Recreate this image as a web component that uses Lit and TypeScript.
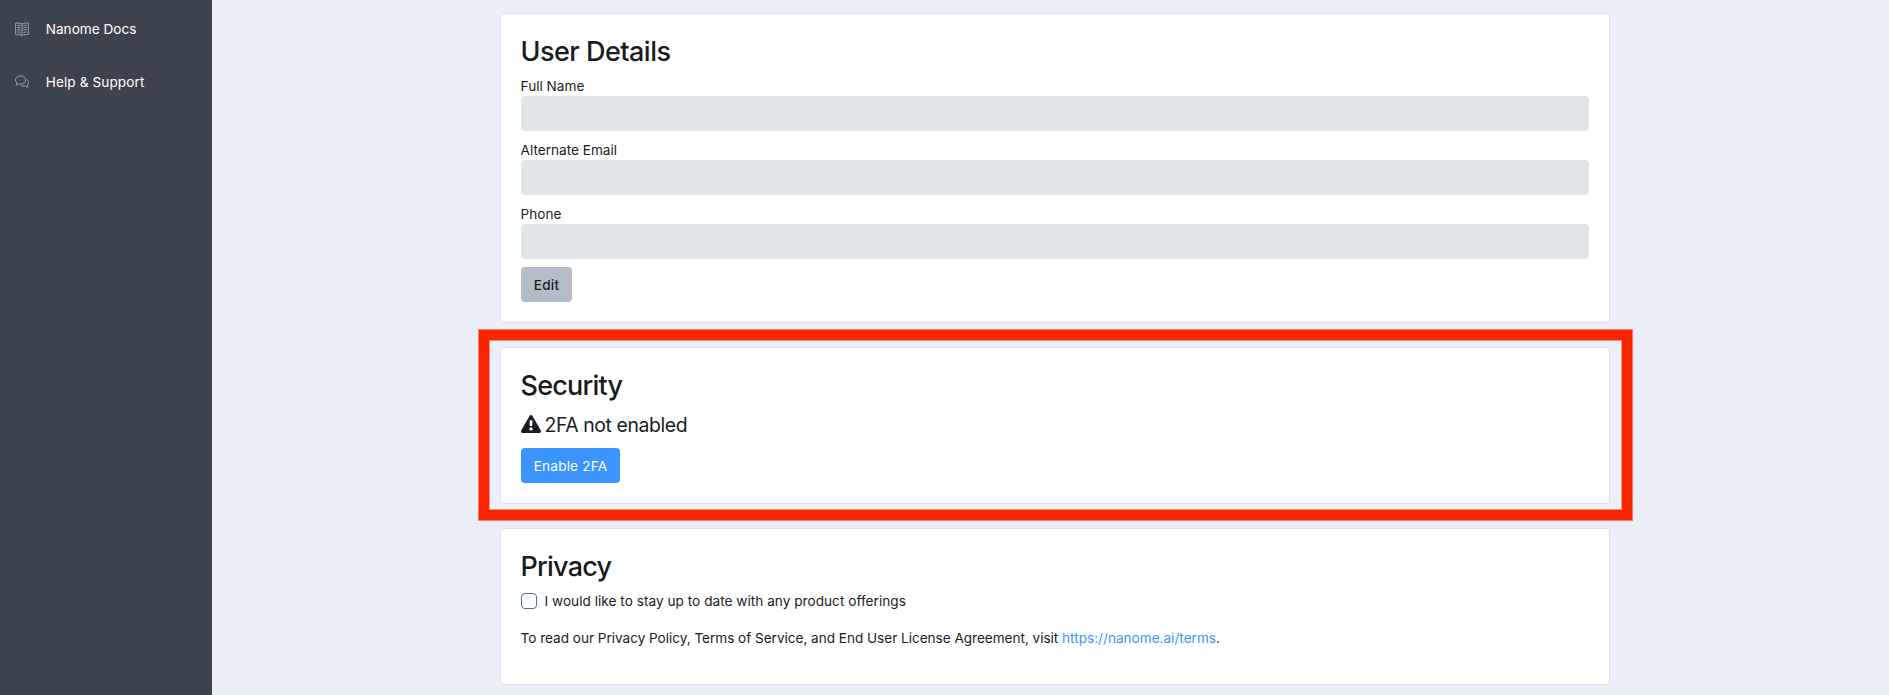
import { LitElement, html, css, svg } from "lit";
import { customElement, property } from "lit/decorators.js";

const bookIcon = svg`
  <path d="M.6 1.1C3 .9 5.2 1.100 7 2.200 8.800 1.100 11 .9 13.400 1.100V12.500C11 12.300 8.800 12.500 7 13.500 5.200 12.500 3 12.300.6 12.500Z"/>
  <path d="M7 2.200V13.500M2.200 3.300C3.600 3.200 4.600 3.500 5.600 4M2.200 5.500C3.600 5.400 4.600 5.700 5.600 6.200M2.200 7.700C3.600 7.600 4.600 7.900 5.600 8.400M2.200 9.900C3.600 9.800 4.600 10.100 5.600 10.600M11.800 3.300C10.400 3.200 9.400 3.500 8.400 4M11.800 5.500C10.400 5.400 9.400 5.700 8.400 6.200M11.800 7.700C10.400 7.600 9.400 7.900 8.400 8.400M11.800 9.900C10.400 9.800 9.400 10.100 8.400 10.600"/>`;

const chatIcon = svg`
  <path d="M5.600.9C8.500.9 10.600 2.700 10.600 5S8.500 9.100 5.600 9.100C4.900 9.100 4.300 9 3.700 8.800 2.900 9.500 2 9.900 1 10 1.500 9.400 1.800 8.700 1.800 7.900 1 7.100.5 6.100.5 5 .5 2.700 2.700.9 5.600.9Z"/>
  <path d="M11.900 4.300C12.900 5 13.500 6 13.500 7.100 13.500 8.200 13 9.100 12.200 9.800 12.200 10.700 12.500 11.500 13 12.200 12 12.100 11.100 11.700 10.300 11 8.500 11.400 6.800 11.100 5.700 10.200"/>`;

@customElement("side-link")
export class SideLink extends LitElement {
  @property() label = "";
  @property() icon = "book";

  static styles = css`
    :host { display: flex; align-items: center; height: 53px; padding-left: 15px; gap: 16.700px; }
    svg { width: 14px; height: 14px; fill: none; stroke: #9caabe; stroke-width: 0.9; flex: none; position: relative; top: -1px; }
    .label { color: #fff; line-height: 21px; letter-spacing: 0.02px; }
    .wide { letter-spacing: 0.1px; }
  `;

  render() {
    return html`
      <svg viewBox="0 0 14 14">${this.icon === "book" ? bookIcon : chatIcon}</svg>
      <span class="label ${this.icon === "chat" ? "wide" : ""}">${this.label}</span>`;
  }
}

@customElement("app-root")
export class AppRoot extends LitElement {
  static styles = css`
    :host {
      display: flex; height: 695px; overflow: hidden; background: #eceff8; color: #181c20;
      font-family: Inter, "Noto Sans", sans-serif; font-size: 13.6px; line-height: 21px;
    }
    * { box-sizing: border-box; }
    .sidebar { width: 212px; flex: none; background: #3c424e; padding-top: 3px; }
    .main { flex: 1; display: flex; justify-content: center; padding-top: 13px; padding-left: 9px; }
    .column { width: 1110px; display: flex; flex-direction: column; gap: 24px; }
    .card { position: relative; background: #fff; border: 1px solid #dee2e8; border-radius: 4px; padding: 20px; }
    h2 { margin: 0 0 7px -0.5px; font-size: 27px; font-weight: 500; height: 34px; line-height: 35px; letter-spacing: -0.52px; }
    .tight { letter-spacing: -0.78px; margin-bottom: 8px; }
    .field { display: flex; flex-direction: column; margin-bottom: 8px; }
    .field span { height: 21px; padding-top: 1px; margin-left: -0.4px; }
    .field input {
      width: 100%; height: 35px; border: 0; border-radius: 4px; background: #dee4e7; padding: 0 12px; font: inherit;
    }
    .btn {
      display: block; height: 35px; border: 0; border-radius: 4px; padding: 2px 0 0; font: inherit; text-align: center;
    }
    .edit { width: 51px; background: #b4bcc9; color: #181c20; font-weight: 500; letter-spacing: 0.2px; }
    .enable { width: 99px; background: #3c95ff; color: #fff; letter-spacing: 0.18px; }
    .status { display: flex; align-items: center; height: 30px; margin-bottom: 8px; font-size: 19.4px; letter-spacing: -0.4px; }
    .status svg { width: 20px; height: 18px; margin-right: 4px; margin-top: -2px; margin-left: -0.5px; flex: none; fill: #181c20; }
    .frame {
      position: absolute; left: -22px; top: -18px; right: -23px; bottom: -17px;
      border: 10px solid #fa2400; box-shadow: 0 0 0 1px #f4806c, inset 0 0 0 1px #f4937f; pointer-events: none;
    }
    .check { display: flex; align-items: center; gap: 7.5px; height: 21px; letter-spacing: 0.03px; }
    .check input {
      appearance: none; width: 16px; height: 16px; margin: 0 0 1px; flex: none; border: 1px solid #466f8d;
      border-radius: 4px; background: #fff;
    }
    .check span { line-height: 21px; }
    .terms { margin: 16px 0 15px -0.4px; letter-spacing: -0.03px; }
    a { color: #3c95ff; text-decoration: none; letter-spacing: 0; }
  `;

  private fields = ["Full Name", "Alternate Email", "Phone"];

  render() {
    return html`
      <nav class="sidebar">
        <side-link icon="book" label="Nanome Docs"></side-link>
        <side-link icon="chat" label="Help &amp; Support"></side-link>
      </nav>
      <main class="main">
        <div class="column">
          <section class="card">
            <h2>User Details</h2>
            ${this.fields.map((f) => html`<label class="field"><span>${f}</span><input disabled /></label>`)}
            <button class="btn edit">Edit</button>
          </section>
          <section class="card">
            <h2 class="tight">Security</h2>
            <div class="status">
              <svg viewBox="0 0 20 18">
                <path fill-rule="evenodd" d="M8.500.9C9.200-.3 10.800-.3 11.500.9L19.700 15.300C20.400 16.500 19.500 18 18.200 18H1.800C.5 18-.4 16.500.3 15.300ZM8.500 5.300 8.800 11H11.200L11.500 5.300ZM10 12.200A1.700 1.700 0 1 0 10 15.600 1.700 1.700 0 1 0 10 12.200Z"/>
              </svg>
              <span>2FA not enabled</span>
            </div>
            <button class="btn enable">Enable 2FA</button>
            <div class="frame"></div>
          </section>
          <section class="card">
            <h2 class="tight">Privacy</h2>
            <label class="check"><input type="checkbox" /><span>I would like to stay up to date with any product offerings</span></label>
            <p class="terms">To read our Privacy Policy, Terms of Service, and End User License Agreement, visit <a href="https://nanome.ai/terms">https://nanome.ai/terms</a>.</p>
          </section>
        </div>
      </main>`;
  }
}
